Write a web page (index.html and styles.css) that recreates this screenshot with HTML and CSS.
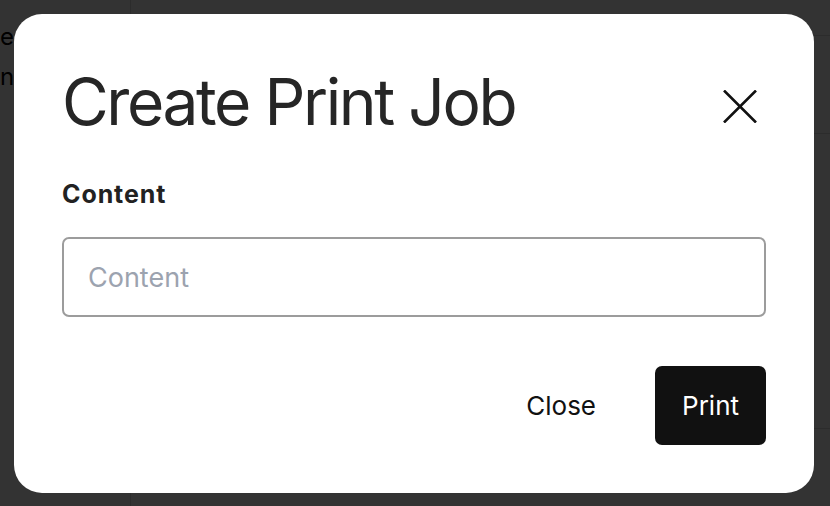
FILE: index.html
```html
<!DOCTYPE html>
<html lang="en">
<head>
<meta charset="utf-8">
<title>Create Print Job</title>
<link rel="stylesheet" href="styles.css">
</head>
<body>
<div class="page">
  <div class="page-text">
    <p>e</p>
    <p>n.</p>
  </div>
  <div class="page-main">
    <div class="row row-1"></div>
    <div class="row row-2"></div>
    <div class="row row-3"></div>
  </div>
</div>
<div class="overlay">
  <div class="modal" role="dialog" aria-labelledby="title">
    <div class="modal-header">
      <h1 id="title" class="modal-title">Create Print Job</h1>
      <button class="icon-btn" aria-label="Close">
        <svg width="34" height="33" viewBox="0 0 34 33" fill="none" stroke="#111" stroke-width="2.6">
          <path d="M1 0.5 L33 32.5 M33 0.5 L1 32.5"/>
        </svg>
      </button>
    </div>
    <label class="field-label" for="content">Content</label>
    <input id="content" class="field-input" type="text" placeholder="Content">
    <div class="modal-actions">
      <button class="btn btn-ghost">Close</button>
      <button class="btn btn-primary">Print</button>
    </div>
  </div>
</div>
</body>
</html>
```
FILE: styles.css
```css
* { box-sizing: border-box; }
html, body { margin: 0; padding: 0; }
body {
  width: 830px;
  height: 506px;
  overflow: hidden;
  font-family: Inter, "Liberation Sans", sans-serif;
  background: #fff;
  position: relative;
}
.page {
  display: flex;
  height: 100%;
}
.page-text {
  width: 131px;
  padding-top: 17px;
  font-size: 24px;
  line-height: 40px;
  color: #000;
  border-right: 1px solid #dcdcdc;
}
.page-text p { margin: 0; }
.page-main { flex: 1; }
.row { border-bottom: 1px solid #dcdcdc; }
.row-1 { height: 36px; }
.row-2 { height: 98px; }
.row-3 { height: 295px; }
.overlay {
  position: absolute;
  inset: 0;
  background: rgba(0, 0, 0, 0.8);
  padding: 14px 16px 13px 14px;
  display: flex;
  align-items: flex-start;
  justify-content: flex-start;
}
.modal {
  width: 800px;
  height: 479px;
  background: #fff;
  border-radius: 28px;
  padding: 48px;
  display: flex;
  flex-direction: column;
}
.modal-header {
  display: flex;
  align-items: flex-start;
  justify-content: space-between;
}
.modal-title {
  margin: 0;
  font-size: 64px;
  font-weight: 400;
  line-height: 80px;
  color: #262626;
  letter-spacing: -2.4px;
}
.icon-btn {
  border: 0;
  background: none;
  padding: 0;
  margin-top: 28px;
  margin-right: 9px;
  display: flex;
  cursor: pointer;
}
.field-label {
  margin-top: 38px;
  font-size: 25px;
  font-weight: 700;
  color: #222;
  line-height: 28px;
  letter-spacing: 0.9px;
}
.field-input {
  margin-top: 29px;
  height: 80px;
  border: 2px solid #9c9c9c;
  border-radius: 7px;
  padding: 0 24px;
  font-family: inherit;
  font-size: 27px;
  color: #222;
  outline: none;
}
.field-input::placeholder { color: #9ca3af; }
.modal-actions {
  margin-top: 49px;
  display: flex;
  justify-content: flex-end;
  gap: 32px;
}
.btn {
  height: 79px;
  padding: 0 27px;
  border: 0;
  border-radius: 7px;
  font-family: inherit;
  font-size: 26px;
  cursor: pointer;
}
.btn-ghost { background: transparent; color: #111; }
.btn-primary { background: #111; color: #fff; }
```
